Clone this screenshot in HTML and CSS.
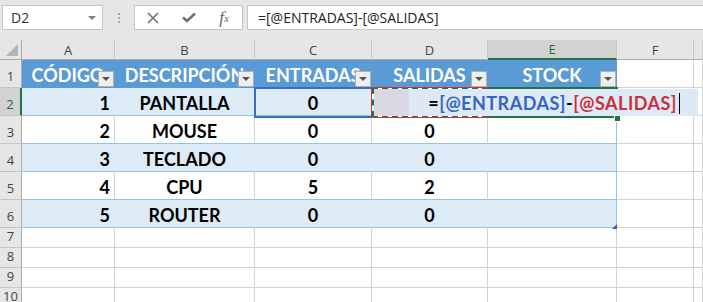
FILE: index.html
```html
<!DOCTYPE html>
<html lang="es">
<head>
  <meta charset="UTF-8">
  <title>Inventario</title>
  <link rel="stylesheet" href="styles.css">
</head>
<body>

<div class="toolbar">
  <div class="namebox">
    <span>D2</span>
    <span class="arrow"></span>
  </div>
  <div class="grip"><i></i><i></i><i></i></div>
  <div class="fxbox">
    <span class="fxbtn">
      <svg width="12" height="12" viewBox="0 0 12 12"><path d="M1 1 L11 11 M11 1 L1 11" stroke="#707070" stroke-width="1.6" fill="none"/></svg>
    </span>
    <span class="fxbtn">
      <svg width="14" height="11" viewBox="0 0 14 11"><path d="M1 5.5 L5 9 L13 1.5" stroke="#707070" stroke-width="2.6" fill="none"/></svg>
    </span>
    <span class="fxbtn fx">f<sub>x</sub></span>
  </div>
  <div class="formula">=[@ENTRADAS]-[@SALIDAS]</div>
</div>

<div class="sheet">
  <div class="corner"><span class="tri"></span></div>
  <div class="ch">A</div>
  <div class="ch">B</div>
  <div class="ch">C</div>
  <div class="ch">D</div>
  <div class="ch sel">E</div>
  <div class="ch">F</div>
  <div class="ch"></div>

  <div class="rh">1</div>
  <div class="c th">CÓDIGO<span class="filter"></span></div>
  <div class="c th">DESCRIPCIÓN<span class="filter"></span></div>
  <div class="c th">ENTRADAS<span class="filter"></span></div>
  <div class="c th">SALIDAS<span class="filter"></span></div>
  <div class="c th last">STOCK<span class="filter"></span></div>
  <div class="c"></div>
  <div class="c"></div>

  <div class="rh sel">2</div>
  <div class="c band num">1</div>
  <div class="c band">PANTALLA</div>
  <div class="c band">0</div>
  <div class="c band"></div>
  <div class="c band last"></div>
  <div class="c"></div>
  <div class="c"></div>

  <div class="rh">3</div>
  <div class="c row num">2</div>
  <div class="c row">MOUSE</div>
  <div class="c row">0</div>
  <div class="c row">0</div>
  <div class="c row last"></div>
  <div class="c"></div>
  <div class="c"></div>

  <div class="rh">4</div>
  <div class="c band num">3</div>
  <div class="c band">TECLADO</div>
  <div class="c band">0</div>
  <div class="c band">0</div>
  <div class="c band last"></div>
  <div class="c"></div>
  <div class="c"></div>

  <div class="rh">5</div>
  <div class="c row num">4</div>
  <div class="c row">CPU</div>
  <div class="c row">5</div>
  <div class="c row">2</div>
  <div class="c row last"></div>
  <div class="c"></div>
  <div class="c"></div>

  <div class="rh">6</div>
  <div class="c band num">5</div>
  <div class="c band">ROUTER</div>
  <div class="c band">0</div>
  <div class="c band">0</div>
  <div class="c band last"></div>
  <div class="c"></div>
  <div class="c"></div>

  <div class="rh">7</div>
  <div class="c"></div><div class="c"></div><div class="c"></div><div class="c"></div><div class="c"></div><div class="c"></div><div class="c"></div>
  <div class="rh">8</div>
  <div class="c"></div><div class="c"></div><div class="c"></div><div class="c"></div><div class="c"></div><div class="c"></div><div class="c"></div>
  <div class="rh">9</div>
  <div class="c"></div><div class="c"></div><div class="c"></div><div class="c"></div><div class="c"></div><div class="c"></div><div class="c"></div>
  <div class="rh">10</div>
  <div class="c"></div><div class="c"></div><div class="c"></div><div class="c"></div><div class="c"></div><div class="c"></div><div class="c"></div>

  <!-- overlays: references, selection, in-cell editor -->
  <div class="ref-blue"></div>
  <div class="active"></div>
  <div class="ref-red"><div class="ants"></div></div>
  <div class="editor">
    <span class="pad"></span>
    <span class="etext">=<b class="blue">[@ENTRADAS]</b>-<b class="red">[@SALIDAS]</b><i class="caret"></i></span>
  </div>
  <div class="handle"></div>
  <div class="resize"></div>
</div>

</body>
</html>
```

FILE: styles.css
```css
body {
  margin: 0;
  width: 703px;
  height: 302px;
  overflow: hidden;
  background-color: #ffffff;
  font-family: 'Open Sans', sans-serif;
}

.toolbar {
  height: 40px;
  box-sizing: border-box;
  padding: 5px 0 0 2px;
  background-color: #e6e6e6;
  display: flex;
  align-items: flex-start;
}

.namebox {
  width: 101px;
  height: 25px;
  box-sizing: border-box;
  border: 1px solid #c6c6c6;
  background-color: #fff;
  display: flex;
  align-items: center;
  justify-content: space-between;
  padding: 0 6px 0 8px;
  font-size: 14px;
  color: #333;
}

.arrow {
  width: 0;
  height: 0;
  border-left: 4px solid transparent;
  border-right: 4px solid transparent;
  border-top: 4px solid #808080;
}

.grip {
  width: 31px;
  padding-top: 8px;
  display: flex;
  flex-direction: column;
  align-items: center;
  gap: 2px;
}

.grip i {
  width: 2px;
  height: 2px;
  background-color: #a6a6a6;
}

.fxbox {
  width: 109px;
  height: 25px;
  box-sizing: border-box;
  border: 1px solid #c6c6c6;
  background-color: #fff;
  display: flex;
  align-items: center;
}

.fxbtn {
  width: 36px;
  display: flex;
  justify-content: center;
  align-items: center;
}

.fx {
  font-family: 'Liberation Serif', serif;
  font-style: italic;
  font-size: 17px;
  color: #666;
}

.fx sub {
  font-size: 11px;
  vertical-align: -1px;
}

.formula {
  flex: 1;
  margin-left: 4px;
  height: 25px;
  box-sizing: border-box;
  border: 1px solid #c6c6c6;
  border-right: none;
  background-color: #fff;
  padding-left: 10px;
  font-size: 14px;
  line-height: 23px;
  color: #222;
  white-space: nowrap;
}

/* grid */

.sheet {
  position: relative;
  display: grid;
  grid-template-columns: 22px 93px 140px 117px 116px 129px 77px 1fr;
  grid-template-rows: 20px repeat(6, 28px) repeat(4, 20px);
}

.sheet > div {
  box-sizing: border-box;
}

.corner {
  position: relative;
  background-color: #e6e6e6;
  border-right: 1px solid #ababab;
  border-bottom: 1px solid #ababab;
}

.corner .tri {
  position: absolute;
  right: 3px;
  bottom: 3px;
  width: 12px;
  height: 12px;
  background-color: #b4b4b4;
  clip-path: polygon(100% 0, 100% 100%, 0 100%);
}

.ch {
  background-color: #e6e6e6;
  border-right: 1px solid #c6c6c6;
  border-bottom: 1px solid #ababab;
  display: flex;
  justify-content: center;
  align-items: center;
  font-size: 13px;
  color: #444;
}

.ch.sel {
  background-color: #d2d2d2;
  border-bottom: 2px solid #217346;
  color: #1e6b41;
}

.rh {
  background-color: #e6e6e6;
  border-right: 1px solid #ababab;
  border-bottom: 1px solid #c6c6c6;
  display: flex;
  justify-content: center;
  align-items: flex-end;
  padding-bottom: 2px;
  font-size: 13px;
  color: #444;
}

.rh.sel {
  background-color: #d2d2d2;
  border-right: 2px solid #217346;
  color: #1e6b41;
}

.c {
  border-right: 1px solid #d4d4d4;
  border-bottom: 1px solid #d4d4d4;
  display: flex;
  justify-content: center;
  align-items: flex-end;
  padding-bottom: 2px;
  overflow: hidden;
  white-space: nowrap;
  font-family: 'Lato', sans-serif;
  font-weight: 700;
  font-size: 18px;
  line-height: 20px;
  color: #000;
}

.c.num {
  justify-content: flex-end;
  padding-right: 4px;
}

.th {
  position: relative;
  background-color: #5b9bd5;
  border-right-color: #5b9bd5;
  border-bottom-color: #5b9bd5;
  color: #fff;
}

.band {
  background-color: #ddebf7;
  border-right-color: #ddebf7;
  border-bottom-color: #9bc2e6;
}

.row {
  border-bottom-color: #9bc2e6;
}

.band.last,
.row.last {
  border-right-color: #9bc2e6;
}

.filter {
  position: absolute;
  right: 0;
  bottom: 0;
  width: 16px;
  height: 16px;
  box-sizing: border-box;
  border: 1px solid #b0b0b0;
  background-color: #eeeeee;
}

.filter::after {
  content: '';
  position: absolute;
  left: 3px;
  top: 5px;
  border-left: 4px solid transparent;
  border-right: 4px solid transparent;
  border-top: 4px solid #555;
}

/* overlays */

.ref-blue {
  position: absolute;
  left: 254px;
  top: 47px;
  width: 119px;
  height: 31px;
  box-sizing: border-box;
  border: 2px solid #3c6cc4;
}

.active {
  position: absolute;
  left: 486px;
  top: 47px;
  width: 132px;
  height: 31px;
  box-sizing: border-box;
  border: 2px solid #217346;
}

.ref-red {
  position: absolute;
  left: 371px;
  top: 47px;
  width: 118px;
  height: 31px;
  box-sizing: border-box;
  border: 1px solid #c8323d;
  background-color: #ffffff;
}

.ants {
  height: 100%;
  box-sizing: border-box;
  border: 2px dashed #217346;
}

.editor {
  position: absolute;
  left: 374px;
  top: 49px;
  width: 324px;
  height: 27px;
  background-color: #dde9f5;
  display: flex;
  align-items: flex-end;
  font-family: 'Lato', sans-serif;
  font-weight: 700;
  font-size: 18px;
  line-height: 20px;
  letter-spacing: 0.5px;
  color: #000;
}

.editor .pad {
  align-self: stretch;
  width: 35px;
  background-color: #d9d8e3;
}

.etext {
  flex: 1;
  text-align: right;
  padding: 0 18px 2px 0;
  white-space: nowrap;
}

.etext b {
  font-weight: 700;
}

.blue {
  color: #3465c4;
}

.red {
  color: #c8323d;
}

.caret {
  display: inline-block;
  width: 1px;
  height: 21px;
  margin-left: 2px;
  vertical-align: -4px;
  background-color: #000;
}

.handle {
  position: absolute;
  left: 614px;
  top: 75px;
  width: 7px;
  height: 7px;
  box-sizing: border-box;
  border: 1px solid #fff;
  background-color: #217346;
}

.resize {
  position: absolute;
  left: 612px;
  top: 184px;
  width: 5px;
  height: 5px;
  background-color: #3b5ea8;
  clip-path: polygon(100% 0, 100% 100%, 0 100%);
}
```
